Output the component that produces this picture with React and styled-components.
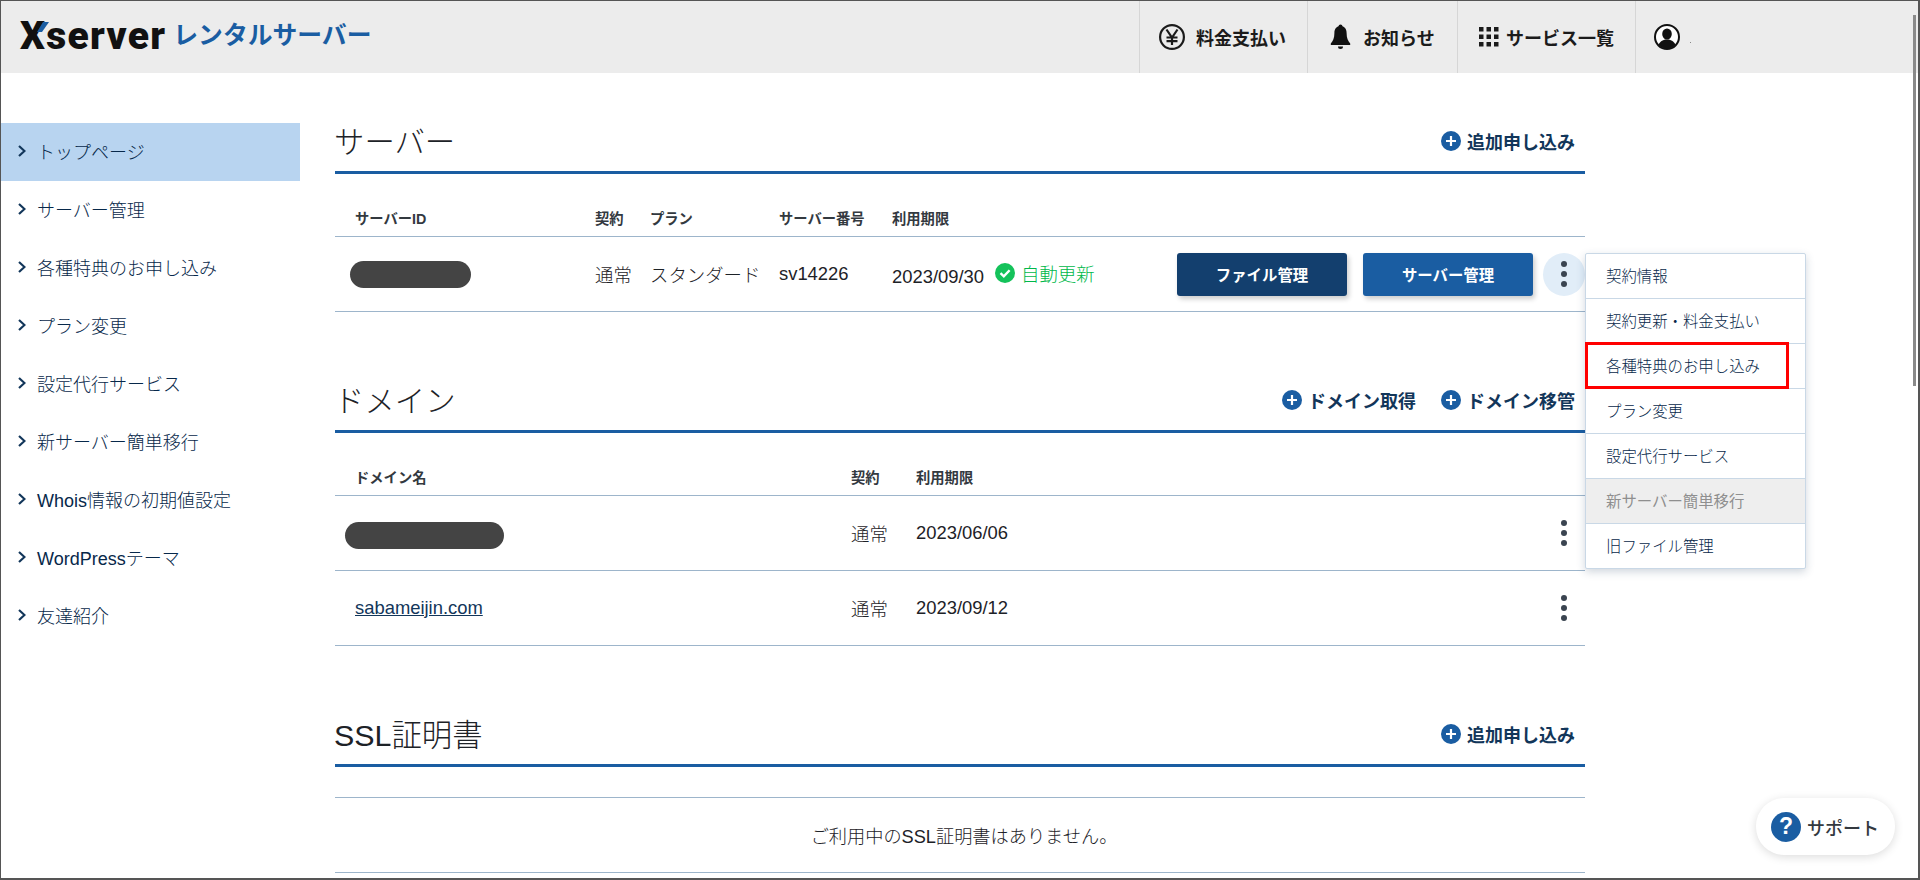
import React from 'react';
import styled, { createGlobalStyle } from 'styled-components';

const NAVY = '#12365a';
const NAVY_TEXT = '#07284a';
const BLUE = '#1a5da2';
const LINE = '#9db5cb';
const INK = '#33393f';
const INK_TEXT = '#1d2227';

const GlobalStyle = createGlobalStyle`
  html, body {
    margin: 0;
    padding: 0;
    height: 880px;
    overflow: hidden;
    background: #fff;
  }
  * { box-sizing: border-box; }
  body {
    font-family: "Liberation Sans", "Noto Sans CJK JP", sans-serif;
    color: ${INK};
  }
`;

const Page = styled.div`
  position: relative;
  width: 1920px;
  height: 880px;
  overflow: hidden;

  /* the grey frame round the screenshot */
  &::after {
    content: '';
    position: absolute;
    inset: 0;
    border: 1px solid #555;
    border-width: 1px 2px 2px 1px;
    pointer-events: none;
  }
`;

const ScrollThumb = styled.div`
  position: absolute;
  top: 15px;
  right: 4px;
  width: 3px;
  height: 371px;
  background: #8a8a8a;
`;

const Header = styled.header`
  display: flex;
  align-items: stretch;
  height: 73px;
  background: #ececec;
`;

const Logo = styled.div`
  display: flex;
  align-items: center;
  gap: 7px;
  padding-left: 20px;
  margin-right: auto;
`;

const LogoMark = styled.span`
  position: relative;
  font-family: "Roboto", "Liberation Sans", sans-serif;
  font-weight: 900;
  font-size: 39px;
  line-height: 1;
  letter-spacing: 1.3px;
  color: #111;

  svg {
    position: absolute;
    left: 17px;
    top: 5px;
  }
`;

const LogoSub = styled.span`
  font-weight: 700;
  font-size: 24.8px;
  line-height: 1;
  color: ${BLUE};
`;

const NavItem = styled.div`
  display: flex;
  align-items: center;
  gap: ${({ $gap }) => $gap}px;
  width: ${({ $w }) => $w}px;
  padding-left: ${({ $pad }) => $pad}px;
  border-left: 1px solid #d6d6d6;
  font-size: 18px;
  font-weight: 700;
  color: #1b1b1b;
`;

const UserItem = styled(NavItem)`
  position: relative;
`;

const Dot = styled.span`
  position: absolute;
  left: 54px;
  top: 42px;
  width: 1px;
  height: 1px;
  background: #888;
`;

const Body = styled.div`
  display: flex;
  align-items: flex-start;
`;

const Sidebar = styled.nav`
  width: 300px;
  margin: 50px 35px 0 0;
`;

const SideLink = styled.div`
  display: flex;
  align-items: center;
  gap: 11px;
  height: 58px;
  padding: 0 0 2px 18px;
  font-size: 18px;
  font-weight: 300;
  color: ${NAVY_TEXT};
  background: ${({ $active }) => ($active ? '#b8d4f0' : 'transparent')};
`;

const Main = styled.main`
  width: 1250px;
  padding-top: 38px;
`;

const Section = styled.section`
  margin-bottom: 58px;
`;

const SectionHead = styled.div`
  display: flex;
  align-items: center;
  justify-content: space-between;
  height: 63px;
  padding: 0 10px 3px 0;
  border-bottom: 3px solid ${BLUE};
`;

const Title = styled.h2`
  margin: 0 0 0 -1px;
  font-size: 30.4px;
  font-weight: 300;
  color: ${INK_TEXT};
`;

const HeadLinks = styled.div`
  display: flex;
  gap: 25px;
`;

const AddLink = styled.a`
  display: flex;
  align-items: center;
  gap: 6px;
  padding-top: 3px;
  font-size: 18px;
  font-weight: 700;
  color: ${NAVY};
`;

const Row = styled.div`
  display: grid;
  grid-template-columns: ${({ $cols }) => $cols};
  align-items: center;
  height: 75px;
  border-bottom: 1px solid ${LINE};
  font-size: 18.4px;
  font-weight: 300;
  color: ${INK_TEXT};
`;

const HeadRow = styled(Row)`
  height: 63px;
  padding-top: 24px;
  font-size: 14.3px;
  font-weight: 700;
  color: ${INK};
`;

const FirstCell = styled.div`
  padding-left: 20px;
`;

const Masked = styled.div`
  width: ${({ $w }) => $w}px;
  height: 27px;
  margin-left: -${({ $back }) => $back}px;
  margin-top: ${({ $drop = 0 }) => $drop}px;
  border-radius: 14px;
  background: #444;
`;

const DomainLink = styled.a`
  color: ${NAVY};
  text-decoration: underline;
`;

const Status = styled.span`
  display: inline-flex;
  align-items: center;
  gap: 6px;
  margin-left: 11px;
  color: #00b84a;
`;

const Actions = styled.div`
  display: flex;
  align-items: center;
  gap: 16px;
`;

const Button = styled.button`
  width: 170px;
  height: 43px;
  border: 0;
  border-radius: 3px;
  background: ${({ $dark }) => ($dark ? '#133f6e' : BLUE)};
  box-shadow: 2px 3px 5px rgba(0, 0, 0, 0.2);
  font-family: inherit;
  font-size: 15.4px;
  font-weight: 700;
  color: #fff;
`;

const MenuAnchor = styled.div`
  position: relative;
  margin-left: ${({ $left }) => $left}px;
`;

const KebabButton = styled.div`
  display: flex;
  flex-direction: column;
  align-items: center;
  justify-content: center;
  gap: 4px;
  width: 42px;
  height: 43px;
  border-radius: 50%;
  background: ${({ $open }) => ($open ? '#e1edf8' : 'transparent')};

  i {
    width: 6px;
    height: 6px;
    border-radius: 50%;
    background: #3a4450;
  }
`;

const Menu = styled.ul`
  position: absolute;
  z-index: 5;
  top: 0;
  left: 42px;
  width: 221px;
  margin: 0;
  padding: 0;
  list-style: none;
  background: #fff;
  border: 1px solid #c9d8e6;
  border-radius: 2px;
  box-shadow: 0 3px 8px rgba(40, 70, 100, 0.22);
`;

const MenuItem = styled.li`
  position: relative;
  display: flex;
  align-items: center;
  height: 45px;
  padding: 0 0 2px 20px;
  font-size: 15.4px;
  font-weight: ${({ $disabled }) => ($disabled ? 400 : 300)};
  color: ${({ $disabled }) => ($disabled ? '#8f8f8f' : NAVY_TEXT)};
  background: ${({ $disabled }) => ($disabled ? '#eeeeee' : 'transparent')};
  border-bottom: 1px solid #c9d8e6;

  &:last-child {
    border-bottom: 0;
    height: 44px;
  }

  /* red annotation box drawn on the screenshot */
  ${({ $marked }) =>
    $marked &&
    `
    &::after {
      content: '';
      position: absolute;
      box-sizing: border-box;
      left: -1px;
      top: -2px;
      width: 204px;
      height: 47px;
      border: 3px solid #f00;
    }
  `}
`;

const Empty = styled.div`
  display: flex;
  align-items: center;
  justify-content: center;
  height: 76px;
  margin-top: 30px;
  padding-left: 8px;
  border-top: 1px solid ${LINE};
  border-bottom: 1px solid ${LINE};
  font-size: 18.2px;
  font-weight: 300;
  color: ${INK_TEXT};
`;

const Support = styled.div`
  position: absolute;
  right: 25px;
  top: 798px;
  display: flex;
  align-items: center;
  gap: 6px;
  width: 139px;
  height: 57px;
  padding-left: 15px;
  border-radius: 28px;
  background: #fff;
  box-shadow: 0 2px 10px rgba(0, 0, 0, 0.14);
  font-size: 18px;
  font-weight: 500;
`;

const SupportMark = styled.span`
  display: flex;
  align-items: center;
  justify-content: center;
  width: 30px;
  height: 30px;
  border-radius: 50%;
  background: ${BLUE};
  color: #fff;
  font-size: 23px;
  font-weight: 700;
`;

const Chevron = () => (
  <svg width="8" height="12" viewBox="0 0 8 12" fill="none" stroke={NAVY} strokeWidth="2.2">
    <polyline points="1,1 6.5,6 1,11" />
  </svg>
);

const PlusIcon = () => (
  <svg width="20" height="20" viewBox="0 0 20 20">
    <circle cx="10" cy="10" r="10" fill={BLUE} />
    <path d="M10 5v10M5 10h10" stroke="#fff" strokeWidth="2.2" />
  </svg>
);

const CheckIcon = () => (
  <svg width="20" height="20" viewBox="0 0 20 20">
    <circle cx="10" cy="10" r="10" fill="#14c25a" />
    <polyline points="5.5,10.2 8.8,13.4 14.6,7.2" fill="none" stroke="#fff" strokeWidth="2.4" />
  </svg>
);

const YenIcon = () => (
  <svg width="26" height="26" viewBox="0 0 26 26" fill="none" stroke="#1b1b1b" strokeWidth="2.2">
    <circle cx="13" cy="13" r="11.9" />
    <path d="M7.5 5.5l5.5 8 5.5-8M13 13.5V21M7.5 13.5h11M7.5 17.2h11" />
  </svg>
);

const BellIcon = () => (
  <svg width="21" height="26" viewBox="0 0 21 26" fill="#111">
    <circle cx="10.5" cy="2.5" r="2" />
    <path d="M10.5 2C6.5 2 4.4 5 4.4 9c0 5-1.4 8-3.6 10.5V21h19.4v-1.5C18 17 16.6 14 16.6 9c0-4-2.1-7-6.1-7z" />
    <path d="M8 22.5h5a2.5 2.5 0 0 1-5 0z" />
  </svg>
);

const GridIcon = () => (
  <svg width="20" height="20" viewBox="0 0 20 20" fill="#1b1b1b">
    {[0, 7.5, 15].map((y) =>
      [0, 7.5, 15].map((x) => <rect key={`${x}-${y}`} x={x} y={y} width="4.5" height="4.5" />)
    )}
  </svg>
);

const UserIcon = () => (
  <svg width="26" height="26" viewBox="0 0 26 26">
    <circle cx="13" cy="13" r="12" fill="#fff" stroke="#111" strokeWidth="2" />
    <ellipse cx="13" cy="10" rx="4.8" ry="5.5" fill="#111" />
    <path d="M4.5 21c1.5-4 5-5.5 8.5-5.5s7 1.5 8.5 5.5a12 12 0 0 1-17 0z" fill="#111" />
  </svg>
);

const sideLinks = [
  'トップページ',
  'サーバー管理',
  '各種特典のお申し込み',
  'プラン変更',
  '設定代行サービス',
  '新サーバー簡単移行',
  'Whois情報の初期値設定',
  'WordPressテーマ',
  '友達紹介',
];

const menuItems = [
  { label: '契約情報' },
  { label: '契約更新・料金支払い' },
  { label: '各種特典のお申し込み', marked: true },
  { label: 'プラン変更' },
  { label: '設定代行サービス' },
  { label: '新サーバー簡単移行', disabled: true },
  { label: '旧ファイル管理' },
];

const SERVER_COLS = '260px 55px 129px 113px 285px 1fr';
const DOMAIN_COLS = '516px 65px 1fr 42px';

const Kebab = ({ open }) => (
  <KebabButton $open={open}>
    <i />
    <i />
    <i />
  </KebabButton>
);

export default function App() {
  return (
    <Page>
      <GlobalStyle />
      <Header>
        <Logo>
          <LogoMark>
            Xserver
            <svg width="12" height="10" viewBox="0 0 12 10">
              <polygon points="6,0 12,0 5,10 0,10" fill={BLUE} />
            </svg>
          </LogoMark>
          <LogoSub>レンタルサーバー</LogoSub>
        </Logo>
        <NavItem $w={168} $pad={19} $gap={11}>
          <YenIcon />
          料金支払い
        </NavItem>
        <NavItem $w={150} $pad={22} $gap={12}>
          <BellIcon />
          お知らせ
        </NavItem>
        <NavItem $w={178} $pad={21} $gap={7}>
          <GridIcon />
          サービス一覧
        </NavItem>
        <UserItem $w={285} $pad={18} $gap={0}>
          <UserIcon />
          <Dot />
        </UserItem>
      </Header>

      <Body>
        <Sidebar>
          {sideLinks.map((label, i) => (
            <SideLink key={label} $active={i === 0}>
              <Chevron />
              {label}
            </SideLink>
          ))}
        </Sidebar>

        <Main>
          <Section>
            <SectionHead>
              <Title>サーバー</Title>
              <AddLink>
                <PlusIcon />
                追加申し込み
              </AddLink>
            </SectionHead>
            <HeadRow $cols={SERVER_COLS}>
              <FirstCell>サーバーID</FirstCell>
              <div>契約</div>
              <div>プラン</div>
              <div>サーバー番号</div>
              <div>利用期限</div>
              <div />
            </HeadRow>
            <Row $cols={SERVER_COLS}>
              <FirstCell>
                <Masked $w={121} $back={5} />
              </FirstCell>
              <div>通常</div>
              <div>スタンダード</div>
              <div>sv14226</div>
              <div>
                2023/09/30
                <Status>
                  <CheckIcon />
                  自動更新
                </Status>
              </div>
              <Actions>
                <Button $dark>ファイル管理</Button>
                <Button>サーバー管理</Button>
                <MenuAnchor $left={-6}>
                  <Kebab open />
                  <Menu>
                    {menuItems.map((item) => (
                      <MenuItem key={item.label} $disabled={item.disabled} $marked={item.marked}>
                        {item.label}
                      </MenuItem>
                    ))}
                  </Menu>
                </MenuAnchor>
              </Actions>
            </Row>
          </Section>

          <Section>
            <SectionHead>
              <Title>ドメイン</Title>
              <HeadLinks>
                <AddLink>
                  <PlusIcon />
                  ドメイン取得
                </AddLink>
                <AddLink>
                  <PlusIcon />
                  ドメイン移管
                </AddLink>
              </HeadLinks>
            </SectionHead>
            <HeadRow $cols={DOMAIN_COLS}>
              <FirstCell>ドメイン名</FirstCell>
              <div>契約</div>
              <div>利用期限</div>
              <div />
            </HeadRow>
            <Row $cols={DOMAIN_COLS}>
              <FirstCell>
                <Masked $w={159} $back={10} $drop={4} />
              </FirstCell>
              <div>通常</div>
              <div>2023/06/06</div>
              <Kebab />
            </Row>
            <Row $cols={DOMAIN_COLS}>
              <FirstCell>
                <DomainLink>sabameijin.com</DomainLink>
              </FirstCell>
              <div>通常</div>
              <div>2023/09/12</div>
              <Kebab />
            </Row>
          </Section>

          <Section>
            <SectionHead>
              <Title>SSL証明書</Title>
              <AddLink>
                <PlusIcon />
                追加申し込み
              </AddLink>
            </SectionHead>
            <Empty>ご利用中のSSL証明書はありません。</Empty>
          </Section>
        </Main>
      </Body>

      <ScrollThumb />
      <Support>
        <SupportMark>?</SupportMark>
        サポート
      </Support>
    </Page>
  );
}
